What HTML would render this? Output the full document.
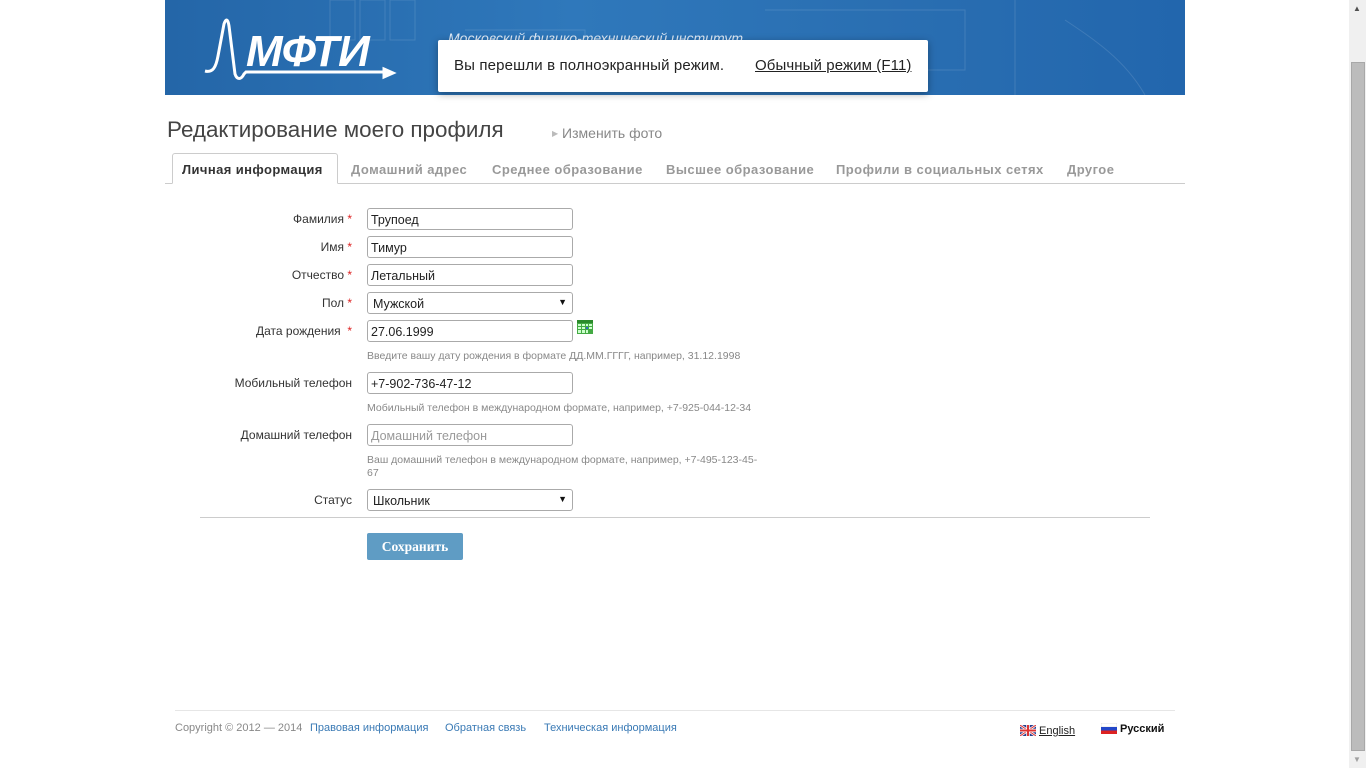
<!DOCTYPE html>
<html><head><meta charset="utf-8"><style>
*{margin:0;padding:0;box-sizing:border-box}
body{width:1366px;height:768px;position:relative;background:#fff;font-family:"Liberation Sans","DejaVu Sans",sans-serif;overflow:hidden;color:#333}
.a{position:absolute;white-space:nowrap}
.hdr{left:165px;top:0;width:1020px;height:95px;background:linear-gradient(90deg,#2466a8,#2f78bb 40%,#2a6fb2 70%,#2266ad)}
.lbl{font-size:12px;color:#333;text-align:right;width:200px;left:152px}
.st{color:#d22}
.inp{left:367px;width:206px;height:22px;border:1px solid #aaa;border-radius:3px;font-size:12.5px;padding:4px 0 0 3px;color:#222;background:#fff}
.sel::after{content:"▼";position:absolute;right:5px;top:4px;font-size:9px;color:#111}
.hint{left:367px;font-size:10.5px;color:#888}
.tab{top:162px;font-size:13px;font-weight:bold;color:#999;letter-spacing:0.45px}
.fl{top:722px;font-size:11px;color:#3a7ab5}
</style></head><body>
<div class="a hdr">
<svg width="1020" height="95" style="position:absolute;left:0;top:0" fill="none" stroke="rgba(255,255,255,0.12)">
<rect x="165" y="0" width="25" height="40"/><rect x="195" y="0" width="25" height="40"/><rect x="225" y="0" width="25" height="40"/><path d="M600 10h200v60h-200M850 0v95M900 20c30 20 60 40 80 75M300 30h120v50"/>
</svg>
<svg width="240" height="95" style="position:absolute;left:0;top:0" fill="none" stroke="#fff" stroke-width="3">
<path d="M40 71c8 2 11 -4 13 -15l6 -32c2 -6 4 -5 5 2l6 48c2 6 6 6 9 0l2 -2h140"/><path d="M219 69l9 4-9 4z" fill="#fff"/>
</svg>
<div class="a" style="left:81px;top:27px;font-size:44px;font-weight:bold;font-style:italic;color:#fff;letter-spacing:-1px">МФТИ</div>
<div class="a" style="left:283px;top:30px;font-size:14px;font-style:italic;color:#dce8f5">Московский физико-технический институт</div>
</div>
<div class="a" style="left:438px;top:40px;width:490px;height:52px;background:#fff;border-radius:2px;box-shadow:0 2px 8px rgba(0,0,0,.35)">
<span class="a" style="left:16px;top:17px;font-size:15px;color:#222;letter-spacing:0.15px">Вы перешли в полноэкранный режим.</span>
<span class="a" style="left:317px;top:17px;font-size:15px;color:#222;text-decoration:underline;letter-spacing:0.1px">Обычный режим (F11)</span>
</div>
<div class="a" style="left:167px;top:117px;font-size:22.4px;color:#444">Редактирование моего профиля</div>
<div class="a" style="left:552px;top:125px;font-size:14px;color:#888"><span style="font-size:8px;color:#bbb;vertical-align:2px">▶</span> Изменить фото</div>
<div class="a" style="left:165px;top:183px;width:1020px;border-top:1px solid #ccc"></div>
<div class="a" style="left:172px;top:153px;width:166px;height:31px;border:1px solid #ccc;border-bottom:1px solid #fff;border-radius:3px 3px 0 0;background:#fff"></div>
<div class="a tab" style="left:182px;color:#333;letter-spacing:0.4px">Личная информация</div>
<div class="a tab" style="left:351px">Домашний адрес</div>
<div class="a tab" style="left:492px">Среднее образование</div>
<div class="a tab" style="left:666px">Высшее образование</div>
<div class="a tab" style="left:836px">Профили в социальных сетях</div>
<div class="a tab" style="left:1067px">Другое</div>

<div class="a lbl" style="top:212px">Фамилия <span class="st">*</span></div>
<div class="a inp" style="top:208px">Трупоед</div>
<div class="a lbl" style="top:240px">Имя <span class="st">*</span></div>
<div class="a inp" style="top:236px">Тимур</div>
<div class="a lbl" style="top:268px">Отчество <span class="st">*</span></div>
<div class="a inp" style="top:264px">Летальный</div>
<div class="a lbl" style="top:296px">Пол <span class="st">*</span></div>
<div class="a inp sel" style="top:292px;padding-left:5px">Мужской</div>
<div class="a lbl" style="top:324px">Дата рождения &nbsp;<span class="st">*</span></div>
<div class="a inp" style="top:320px">27.06.1999</div>
<svg class="a" style="left:577px;top:320px" width="16" height="14"><rect x="0" y="0" width="16" height="14" fill="#4a4"/><rect x="0" y="0" width="16" height="3" fill="#2a8a2a"/><g fill="#cfc"><rect x="1" y="4" width="3" height="2"/><rect x="5" y="4" width="3" height="2"/><rect x="9" y="4" width="2" height="2"/><rect x="12" y="4" width="3" height="2"/><rect x="1" y="7" width="3" height="2"/><rect x="5" y="7" width="3" height="2"/><rect x="12" y="7" width="3" height="2"/><rect x="1" y="10" width="3" height="3"/><rect x="5" y="10" width="3" height="3"/><rect x="9" y="10" width="2" height="3"/></g><rect x="9" y="7" width="2" height="2" fill="#36c"/></svg>
<div class="a hint" style="top:350px">Введите вашу дату рождения в формате ДД.ММ.ГГГГ, например, 31.12.1998</div>
<div class="a lbl" style="top:376px">Мобильный телефон</div>
<div class="a inp" style="top:372px">+7-902-736-47-12</div>
<div class="a hint" style="top:402px">Мобильный телефон в международном формате, например, +7-925-044-12-34</div>
<div class="a lbl" style="top:428px">Домашний телефон</div>
<div class="a inp" style="top:424px;color:#999">Домашний телефон</div>
<div class="a hint" style="top:454px;line-height:13px">Ваш домашний телефон в международном формате, например, +7-495-123-45-<br>67</div>
<div class="a lbl" style="top:493px">Статус</div>
<div class="a inp sel" style="top:489px;padding-left:5px">Школьник</div>
<div class="a" style="left:200px;top:517px;width:950px;border-top:1px solid #ccc"></div>
<div class="a" style="left:367px;top:533px;width:96px;height:27px;background:#5f9cc4;border-radius:2px;color:#fff;font-family:'Liberation Serif',serif;font-weight:bold;font-size:13.5px;text-align:center;line-height:27px">Сохранить</div>

<div class="a" style="left:175px;top:710px;width:1000px;border-top:1px solid #e6e6e6"></div>
<div class="a fl" style="left:175px;color:#888">Copyright © 2012 — 2014</div>
<div class="a fl" style="left:310px">Правовая информация</div>
<div class="a fl" style="left:445px">Обратная связь</div>
<div class="a fl" style="left:544px">Техническая информация</div>
<svg class="a" style="left:1020px;top:725px" width="16" height="11"><rect width="16" height="11" fill="#2a3f8f"/><path d="M0 0L16 11M16 0L0 11" stroke="#fff" stroke-width="2.5"/><path d="M0 0L16 11M16 0L0 11" stroke="#d33" stroke-width="1"/><path d="M8 0v11M0 5.5h16" stroke="#fff" stroke-width="3.5"/><path d="M8 0v11M0 5.5h16" stroke="#d33" stroke-width="2"/></svg>
<div class="a" style="left:1039px;top:725px;font-size:11px;color:#222;text-decoration:underline">English</div>
<svg class="a" style="left:1101px;top:723px" width="16" height="11"><rect width="16" height="4" fill="#fff" stroke="#ccc" stroke-width=".5"/><rect y="4" width="16" height="3.5" fill="#2246c8"/><rect y="7.5" width="16" height="3.5" fill="#d22"/></svg>
<div class="a" style="left:1120px;top:723px;font-size:11px;font-weight:bold;color:#111">Русский</div>

<div class="a" style="left:1349px;top:0;width:17px;height:768px;background:#f0f0f0"></div>
<div class="a" style="left:1351px;top:62px;width:14px;height:689px;background:#bcbcbc;border:1px solid #a8a8a8"></div>
<div class="a" style="left:1353px;top:4px;font-size:8px;color:#505050">▲</div>
<div class="a" style="left:1353px;top:755px;font-size:8px;color:#a0a0a0">▼</div>
</body></html>
